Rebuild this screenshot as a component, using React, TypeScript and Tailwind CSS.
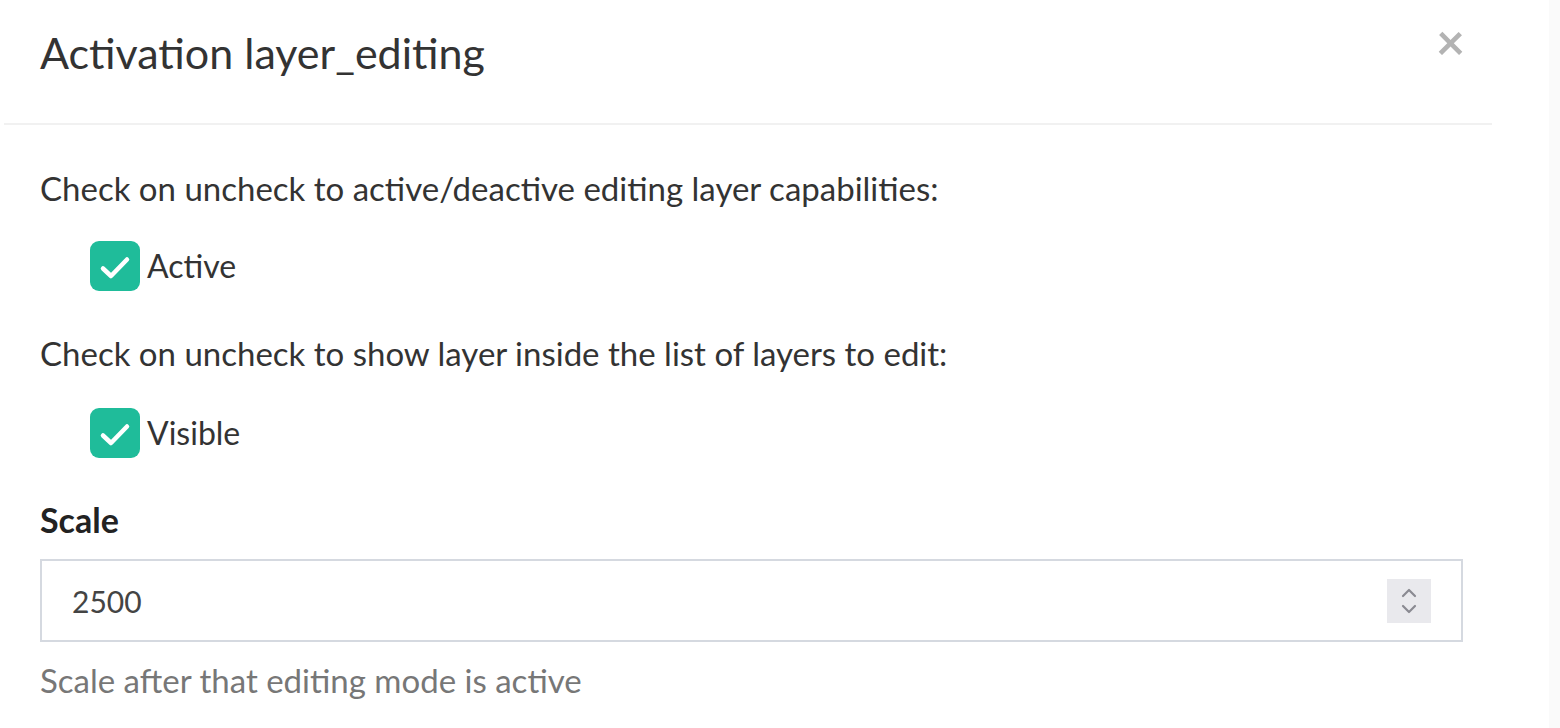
import React from 'react';

const Check = ({ label }: { label: string }) => (
  <div className="flex items-center pl-[50px]">
    <span className="h-[50px] w-[50px] rounded-[9px] bg-[#1fbc9a]">
      <svg width="50" height="50" viewBox="0 0 50 50" fill="none" stroke="white" strokeWidth="4.5" strokeLinecap="round" strokeLinejoin="round">
        <path d="M13 27.5l8 7.5 16-16.5" />
      </svg>
    </span>
    <span className="ml-[7px] text-[32px] leading-[40px] text-[#333]">{label}</span>
  </div>
);

export default function App() {
  return (
    <div className="flex h-[728px] w-full bg-white font-['Lato',sans-serif] text-[#333]">
      <div className="ml-[4px] w-[1488px]">
        <div className="flex h-[125px] items-start justify-between border-b-2 border-[#f1f1f1] pl-[36px] pr-[27px]">
          <h1 className="pt-[27px] text-[43px] leading-[1.2] font-normal text-[#333]">Activation layer_editing</h1>
          <span className="pt-[16px] text-[50px] leading-none font-bold text-[#b3b3b3]">×</span>
        </div>
        <div className="pl-[36px] pr-[29px]">
          <p className="mt-[43px] text-[33px] leading-[40px]">Check on uncheck to active/deactive editing layer capabilities:</p>
          <div className="mt-[33px]">
            <Check label="Active" />
          </div>
          <p className="mt-[42px] text-[33px] leading-[40px]">Check on uncheck to show layer inside the list of layers to edit:</p>
          <div className="mt-[35px]">
            <Check label="Visible" />
          </div>
          <p className="mt-[42px] text-[34px] leading-[40px] font-bold text-[#222]">Scale</p>
          <div className="mt-[19px] flex h-[83px] items-center justify-between border-2 border-[#d5d9e0] pl-[30px] pr-[30px]">
            <span className="text-[30px] leading-[36px] text-[#444]">2500</span>
            <span className="flex h-[44px] w-[44px] flex-col items-center justify-center bg-[#e9e9ed]">
              <svg width="20" height="32" viewBox="0 0 20 32" fill="none" stroke="#8a8a92" strokeWidth="2.2" strokeLinecap="round" strokeLinejoin="round">
                <path d="M4 11l6-6 6 6" />
                <path d="M4 21l6 6 6-6" />
              </svg>
            </span>
          </div>
          <p className="mt-[18px] text-[33px] leading-[40px] text-[#777]">Scale after that editing mode is active</p>
        </div>
      </div>
      <div className="ml-auto h-full w-[11px] bg-[#fafafa]" />
    </div>
  );
}
